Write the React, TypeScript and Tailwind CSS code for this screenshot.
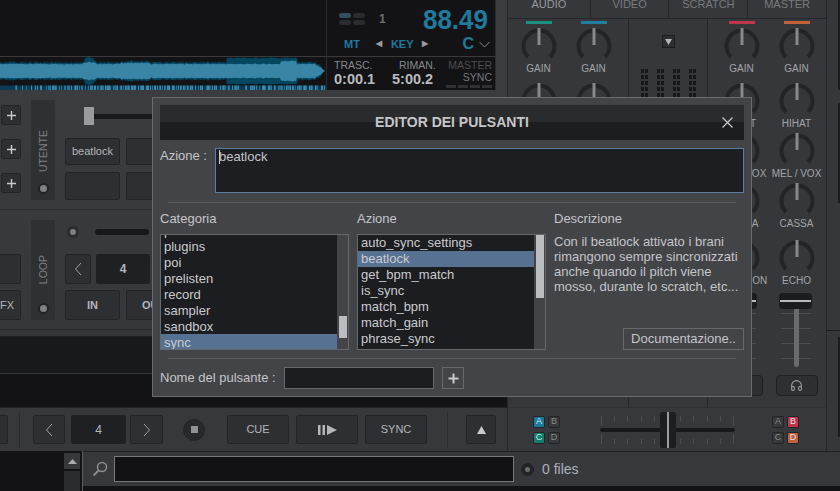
import { Headphones } from "lucide-react";

const rnd = (i: number) => {
  const v = Math.sin(i * 12.9898) * 43758.5453;
  return v - Math.floor(v);
};

// waveform envelopes, one value per pixel
const CENTER = 14;
const lightAmp = (x: number) => {
  let a = 6.5 + rnd(x) * 1;
  if (x > 82 && x < 96) a += 2 - Math.abs(x - 89) / 7;
  if (x > 120 && x < 150) a += 1;
  if (x > 280 && x < 297) a += 3;
  if (x > 315) a -= (x - 315) * 0.7;
  return Math.max(a, 0);
};
const darkAmp = (x: number) => {
  let a = lightAmp(x) + 1 + rnd(x + 500) * 1.3;
  if (x >= 227 && x < 298) a = 12.5 + rnd(x + 900) * 1.2;
  if (x > 84 && x < 94) a += 3;
  return x > 322 ? 0 : a;
};
const XS = Array.from({ length: 327 }, (_, i) => i);
const shape = (amp: (x: number) => number) =>
  XS.map((x) => `${x},${CENTER - amp(x)}`).join(" ") +
  " " +
  [...XS].reverse().map((x) => `${x},${CENTER + amp(x)}`).join(" ");

function Waveform() {
  return (
    <svg width="326" height="33" viewBox="0 0 326 33" className="block">
      <polygon points={shape(darkAmp)} fill="#03465f" />
      <polygon points={shape(lightAmp)} fill="#3a84a6" />
      <rect x="0" y="28.5" width="326" height="4.5" fill="#0c3a52" />
      {XS.filter((x) => x > 13 && rnd(x + 40) > 0.42).map((x) => (
        <rect key={x} x={x} y="28.5" width="1" height="4.5" fill={rnd(x) > 0.5 ? "#3f87a8" : "#27708f"} />
      ))}
    </svg>
  );
}

function Knob({ label, className }: { label?: string; className: string }) {
  return (
    <div className={`flex flex-col items-center w-[55px] shrink-0 ${className}`}>
      <svg width="40" height="36" viewBox="0 0 40 36" className="block shrink-0">
        <path d="M9 30 A15.5 15.5 0 1 1 31 30" fill="none" stroke="#232427" strokeWidth="4" />
        <line x1="20" y1="1" x2="20" y2="18" stroke="#87888b" strokeWidth="3" />
      </svg>
      {label && <span className="text-[10px] leading-none mt-px text-[#a3a5a8] whitespace-nowrap">{label}</span>}
    </div>
  );
}

function Fader() {
  return (
    <div className="relative flex flex-col items-center w-[55px] h-[74px]">
      <div className="absolute top-[20px] left-[12px] w-[30px] h-[60px] flex flex-col gap-[14px]">
        {[0, 1, 2, 3].map((i) => (
          <div key={i} className="h-px bg-[#4d4e51]" />
        ))}
      </div>
      <div className="relative w-[5px] h-[60px] mt-[14px] bg-[#6a6b6e] rounded-b-sm" />
      <div className="absolute top-0 left-[10px] w-[33px] h-[16px] bg-[#1b1c1f] rounded-sm flex items-center px-[1px]">
        <div className="w-full h-[2px] bg-[#b9babc]" />
      </div>
    </div>
  );
}

function Channel({ color, labels }: { color: string; labels: string[] }) {
  return (
    <div className="flex flex-col items-center w-[55px]">
      <div className={`w-[26px] h-[3px] mt-[2px] mb-[3px] ${color}`} />
      <Knob label={labels[0]} className="h-[55px]" />
      <Knob label={labels[1]} className="h-[50px]" />
      <Knob label={labels[2]} className="h-[50px]" />
      <Knob label={labels[3]} className="h-[57px]" />
      <Knob label={labels[4]} className="h-[54px]" />
      <Fader />
      <div className="w-[42px] h-[21px] mt-[8px] border border-[#1f2023] rounded-sm bg-[#2e2f32] flex items-center justify-center text-[#9a9b9e]">
        <Headphones size={13} strokeWidth={2} />
      </div>
    </div>
  );
}

function Btn({ className, children }: { className: string; children?: React.ReactNode }) {
  return (
    <div className={`flex items-center justify-center bg-[#2e2f32] border border-[#232427] rounded-[2px] text-[#b4b6ba] shrink-0 ${className}`}>
      {children}
    </div>
  );
}

function Chevron({ dir }: { dir: "l" | "r" }) {
  return (
    <svg width="8" height="14" viewBox="0 0 8 14" className="block">
      <polyline points={dir === "l" ? "7,1 1.5,7 7,13" : "1,1 6.5,7 1,13"} fill="none" stroke="#a0a2a5" strokeWidth="1" />
    </svg>
  );
}

function SidePanel({ label, className, labelClass }: { label: string; className: string; labelClass: string }) {
  return (
    <div className={`w-[24px] h-[100px] bg-[#2f3033] border border-[#303134] shrink-0 flex flex-col items-center ${className}`}>
      <span className={`[writing-mode:vertical-rl] rotate-180 text-[10.5px] leading-none text-[#7d7f82] ${labelClass}`}>{label}</span>
      <div className="mt-auto mb-[5px] w-[7px] h-[7px] rounded-full bg-[#808184] border-[2.5px] border-[#222326] box-content" />
    </div>
  );
}

function Letter({ t, on }: { t: string; on?: string }) {
  return (
    <div
      className={`w-[12px] h-[12px] rounded-[2px] flex items-center justify-center text-[9px] leading-none border border-[#232427] ${
        on ? `${on} text-[#d4e2e6]` : "bg-[#38393c] text-[#85878a]"
      }`}
    >
      {t}
    </div>
  );
}

function ListBox({
  items,
  selected,
  thumbClass,
  scrollOffset,
  rowClass,
}: {
  items: string[];
  selected: string;
  thumbClass: string;
  scrollOffset: string;
  rowClass: string;
}) {
  return (
    <div className="relative w-[189px] h-[116px] border border-[#66686c] bg-[#1c1d20] overflow-hidden">
      <div className={`w-[176px] ${scrollOffset}`}>
        {items.map((it) => (
          <div key={it} className={`h-[16px] pl-[3px] text-[13px] text-[#c9cbce] ${rowClass} ${it === selected ? "bg-[#567192]" : ""}`}>
            {it}
          </div>
        ))}
      </div>
      <div className="absolute right-0 top-0 bottom-0 w-[11px] bg-[#434448]">
        <div className={`absolute right-[1px] w-[8px] bg-[#bcbdc1] ${thumbClass}`} />
      </div>
    </div>
  );
}

function Dialog() {
  return (
    <div className="absolute left-[152px] top-[97px] w-[600px] h-[300px] bg-[#434448] border border-[#6a6b6f] p-[7px] text-[#c3c5c9] text-[13px]">
      <div className="relative h-[35px] flex items-center justify-center bg-[linear-gradient(#2a2b2d_50%,#1c1d1f_50%)]">
        <span className="font-bold text-[14px] text-[#c5c6c8]">EDITOR DEI PULSANTI</span>
        <svg width="11" height="11" viewBox="0 0 11 11" className="absolute right-[11px] top-[12px]">
          <path d="M0.5 0.5 L10.5 10.5 M10.5 0.5 L0.5 10.5" stroke="#c9cacc" strokeWidth="1.2" />
        </svg>
      </div>
      <div className="flex mt-[8px]">
        <div className="w-[55px] leading-[16px]">Azione :</div>
        <div className="w-[529px] h-[45px] border border-[#5d7c9f] bg-[#1d1e21] pl-[3px] leading-[16px] flex items-start">
          <span className="w-px h-[14px] -mr-px bg-[#c9cbce] mt-[1px]" />
          <span>beatlock</span>
        </div>
      </div>
      <div className="h-px bg-[#5a5b5f] mx-[8px] mt-[9px]" />
      <div className="flex mt-[8px] gap-[8px]">
        <div className="w-[189px]">
          <div className="h-[16px] leading-[16px] mb-[7px]">Categoria</div>
          <ListBox
            items={["pioneer", "plugins", "poi", "prelisten", "record", "sampler", "sandbox", "sync"]}
            selected="sync"
            scrollOffset="-mt-[13px]"
            rowClass="leading-[18px]"
            thumbClass="top-[81px] h-[22px]"
          />
        </div>
        <div className="w-[189px]">
          <div className="h-[16px] leading-[16px] mb-[7px]">Azione</div>
          <ListBox
            items={["auto_sync_settings", "beatlock", "get_bpm_match", "is_sync", "match_bpm", "match_gain", "phrase_sync"]}
            selected="beatlock"
            scrollOffset="mt-0"
            rowClass="leading-[16px]"
            thumbClass="top-0 h-[63px]"
          />
        </div>
        <div className="flex-1 flex flex-col">
          <div className="h-[16px] leading-[16px] mb-[7px]">Descrizione</div>
          <p className="leading-[15px]">
            Con il beatlock attivato i brani
            <br />
            rimangono sempre sincronizzati
            <br />
            anche quando il pitch viene
            <br />
            mosso, durante lo scratch, etc...
          </p>
          <div className="mt-auto self-end w-[121px] h-[22px] border border-[#66686c] flex items-center justify-center">
            Documentazione..
          </div>
        </div>
      </div>
      <div className="h-px bg-[#5a5b5f] mx-[8px] mt-[8px]" />
      <div className="flex items-center mt-[8px]">
        <div className="w-[124px]">Nome del pulsante :</div>
        <div className="w-[150px] h-[22px] border border-[#66686c] bg-[#1c1d20]" />
        <div className="w-[22px] h-[22px] ml-[8px] border border-[#66686c] flex items-center justify-center">
          <svg width="11" height="11" viewBox="0 0 11 11">
            <path d="M5.5 0.5 V10.5 M0.5 5.5 H10.5" stroke="#c9cacc" strokeWidth="2" />
          </svg>
        </div>
      </div>
    </div>
  );
}

function DeckInfo() {
  return (
    <div className="w-[170px] h-[90px] border-l border-r border-[#2c2d2f] bg-[#131316] flex flex-col">
      <div className="h-[57px] flex flex-col px-[12px] border-b border-[#3a3a3c]">
        <div className="flex items-center h-[37px]">
          <div className="grid grid-cols-2 gap-x-[2px] gap-y-[2px] w-[26px]">
            <div className="h-[5px] rounded-full bg-[#34505f]" />
            <div className="h-[5px] rounded-full bg-[#2b2c2f]" />
            <div className="h-[5px] rounded-full bg-[#2b2c2f]" />
            <div className="h-[5px] rounded-full bg-[#2b2c2f]" />
          </div>
          <span className="ml-[14px] text-[12px] font-bold text-[#6d6f72]">1</span>
          <span className="ml-auto -mr-[5px] text-[26px] leading-none font-bold text-[#1f7a9c] scale-y-[1.07]">88.49</span>
        </div>
        <div className="flex items-center h-[14px] text-[#1f7a9c] font-bold text-[11px]">
          <span className="ml-[5px]">MT</span>
          <span className="ml-[16px] text-[8px] text-[#9a9b9e]">◀</span>
          <span className="ml-[9px]">KEY</span>
          <span className="ml-[8px] text-[8px] text-[#9a9b9e]">▶</span>
          <span className="ml-[35px] text-[16px]">C</span>
          <svg width="11" height="7" viewBox="0 0 11 7" className="ml-[5px] shrink-0">
            <polyline points="0.5,1 5.5,6 10.5,1" fill="none" stroke="#88898c" strokeWidth="1" />
          </svg>
        </div>
      </div>
      <div className="flex flex-1 pl-[7px] pt-[2px]">
        <div className="w-[58px] shrink-0">
          <div className="text-[10.5px] leading-[12px] text-[#86888b]">TRASC.</div>
          <div className="text-[14.5px] leading-[17px] font-bold text-[#b9babd]">0:00.1</div>
        </div>
        <div className="w-[54px] shrink-0 flex flex-col">
          <div className="text-[10.5px] leading-[12px] text-[#86888b] pl-[7px]">RIMAN.</div>
          <div className="text-[14.5px] leading-[17px] font-bold text-[#b9babd]">5:00.2</div>
        </div>
        <div className="w-[46px] shrink-0 flex flex-col items-end">
          <div className="text-[10.5px] leading-[12px] text-[#4c4d50] whitespace-nowrap">MASTER</div>
          <div className="text-[10.5px] leading-[13px] text-[#77797c]">SYNC</div>
          <div className="flex gap-[2px] mt-[1px] w-[46px]">
            {[0, 1, 2, 3].map((i) => (
              <div key={i} className="flex-1 h-[3px] bg-[#2f3033]" />
            ))}
          </div>
        </div>
      </div>
    </div>
  );
}

function Deck() {
  return (
    <div className="w-[507px] shrink-0 flex flex-col">
      <div className="h-[90px] flex bg-[#131316]">
        <div className="w-[326px] flex flex-col">
          <div className="h-[57px] border-b border-[#3a3a3c]" />
          <Waveform />
        </div>
        <DeckInfo />
        <div className="flex-1 bg-[#3b3c40]" />
      </div>

      <div className="h-[241px] flex flex-col bg-[linear-gradient(#3b3c40,#36373b)]">
        <div className="h-[120px] flex border-b border-[#2c2d30]">
          <div className="w-[31px] pl-[1px] pt-[15px] flex flex-col gap-[14px]">
            {[0, 1, 2].map((i) => (
              <Btn key={i} className="w-[20px] h-[20px]">
                <svg width="9" height="9" viewBox="0 0 9 9">
                  <path d="M4.5 0 V9 M0 4.5 H9" stroke="#c9cacc" strokeWidth="1.4" />
                </svg>
              </Btn>
            ))}
          </div>
          <SidePanel label="UTENTE" className="mt-[10px]" labelClass="mt-[29px]" />
          <div className="pl-[10px] flex flex-col">
            <div className="flex items-center h-[18px] mt-[17px] ml-[19px]">
              <div className="w-[10px] h-[18px] bg-[#9a9b9d]" />
              <div className="w-[300px] h-[5px] bg-[#18191b]" />
            </div>
            <div className="flex gap-[6px] mt-[13px]">
              <Btn className="w-[55px] h-[27px] text-[11px] text-[#8f9194]">beatlock</Btn>
              <Btn className="w-[55px] h-[27px]" />
            </div>
            <div className="flex gap-[6px] mt-[7px]">
              <Btn className="w-[55px] h-[28px]" />
              <Btn className="w-[55px] h-[28px]" />
            </div>
          </div>
        </div>
        <div className="h-[120px] flex border-b border-[#232427]">
          <div className="w-[31px] pt-[44px] flex flex-col gap-[6px]">
            <Btn className="w-[21px] h-[30px] rounded-l-none border-l-0" />
            <Btn className="w-[21px] h-[30px] rounded-l-none border-l-0 justify-end pr-[6px] text-[11px] text-[#a9abae]">FX</Btn>
          </div>
          <SidePanel label="LOOP" className="mt-[10px]" labelClass="mt-[34px]" />
          <div className="pl-[10px] flex flex-col">
            <div className="flex items-center h-[20px] mt-[12px]">
              <div className="ml-[2px] w-[6px] h-[6px] rounded-full bg-[#808184] border-[3px] border-[#2a2b2e] box-content" />
              <div className="ml-[16px] w-[54px] h-[6px] rounded-full bg-[#17181a]" />
            </div>
            <div className="flex gap-[5px] mt-[12px]">
              <Btn className="w-[26px] h-[30px]">
                <Chevron dir="l" />
              </Btn>
              <div className="w-[54px] h-[30px] bg-[#1f2023] rounded-[2px] flex items-center justify-center text-[12px] font-bold text-[#b4b6ba]">
                4
              </div>
            </div>
            <div className="flex gap-[6px] mt-[6px]">
              <Btn className="w-[55px] h-[30px] text-[11px] font-bold">IN</Btn>
              <Btn className="w-[55px] h-[30px] text-[11px] font-bold">OUT</Btn>
            </div>
          </div>
        </div>
      </div>

      <div className="h-[6px] bg-[#35363a] border-b border-[#1d1e20]" />
      <div className="h-[70px] bg-[#131316] flex flex-col">
        <div className="h-[37px] bg-[#18191b] border-b border-[#39393b]" />
      </div>

      <div className="h-[44px] flex items-center bg-[#37383c] border-t border-[#1f2022] pr-[11px]">
        <Btn className="w-[8px] h-[29px] rounded-l-none border-l-0" />
        <div className="w-px h-[36px] bg-[#2b2c2f] ml-[11px]" />
        <Btn className="w-[32px] h-[29px] ml-[13px]">
          <Chevron dir="l" />
        </Btn>
        <div className="w-[55px] h-[29px] ml-[6px] bg-[#1f2023] rounded-[2px] flex items-center justify-center text-[12px] text-[#b4b6ba]">
          4
        </div>
        <Btn className="w-[33px] h-[29px] ml-[4px]">
          <Chevron dir="r" />
        </Btn>
        <div className="w-[22px] h-[22px] ml-[20px] rounded-full bg-[#28292c] border border-[#232427] flex items-center justify-center">
          <div className="w-[7px] h-[7px] bg-[#8f9093]" />
        </div>
        <Btn className="w-[62px] h-[29px] ml-[22px] text-[11px]">CUE</Btn>
        <Btn className="w-[62px] h-[29px] ml-[7px]">
          <svg width="19" height="10" viewBox="0 0 19 10">
            <path d="M0 0 H2.5 V10 H0 Z M4.5 0 H7 V10 H4.5 Z M9 0 L19 5 L9 10 Z" fill="#b4b6ba" />
          </svg>
        </Btn>
        <Btn className="w-[62px] h-[29px] ml-[7px] text-[11px]">SYNC</Btn>
        <div className="w-px h-[36px] bg-[#2b2c2f] ml-[20px]" />
        <Btn className="w-[30px] h-[29px] ml-[18px]">
          <svg width="9" height="8" viewBox="0 0 9 8">
            <path d="M4.5 0 L9 8 H0 Z" fill="#c9cacc" />
          </svg>
        </Btn>
      </div>
    </div>
  );
}

function Crossfader() {
  return (
    <div className="relative ml-[40px] w-[135px] h-[36px] flex items-center">
      <div className="absolute inset-x-[1px] top-[4px] bottom-[4px] flex justify-between">
        {Array.from({ length: 11 }, (_, i) => (
          <div key={i} className="w-px flex flex-col justify-between">
            <div className={`w-px bg-[#4d4e51] ${i % 5 === 0 ? "h-[10px]" : "h-[5px]"}`} />
            <div className={`w-px bg-[#4d4e51] ${i % 5 === 0 ? "h-[10px]" : "h-[5px]"}`} />
          </div>
        ))}
      </div>
      <div className="relative w-full h-[4px] rounded-full bg-[#17181a]" />
      <div className="absolute left-[60px] top-0 w-[16px] h-[36px] bg-[#1d1e21] rounded-[2px] flex justify-center">
        <div className="w-[2px] h-full bg-[#9a9b9e]" />
      </div>
    </div>
  );
}

function Mixer() {
  return (
    <div className="flex-1 flex">
      <div className="w-[320px] flex flex-col border-l border-r border-[#26272a]">
        <div className="h-[19px] flex border-b border-[#26272a] bg-[#36373b] text-[11px] leading-[9px] text-[#787a7d] overflow-hidden">
          <div className="w-[82px] text-center text-[#96989b]">AUDIO</div>
          <div className="w-[79px] text-center border-l border-[#26272a]">VIDEO</div>
          <div className="w-[79px] text-center border-l border-[#26272a]">SCRATCH</div>
          <div className="w-[79px] text-center border-l border-[#26272a]">MASTER</div>
        </div>
        <div className="h-[388px] flex bg-[#36373b]">
          {/* everything below the first row of this column sits behind the dialog */}
          <div className="w-[121px] flex justify-center pr-[4px] border-r border-[#26272a]">
            <Channel color="bg-[#1b8f80]" labels={["GAIN"]} />
            <Channel color="bg-[#1f7f9f]" labels={["GAIN"]} />
          </div>
          <div className="w-[79px] border-r border-[#26272a] flex flex-col items-center">
            <div className="mt-[16px] w-[13px] h-[13px] border border-[#1c1d1f] bg-[#2d2e31] flex items-center justify-center">
              <svg width="7" height="6" viewBox="0 0 7 6">
                <path d="M0 0 H7 L3.5 6 Z" fill="#b4b6ba" />
              </svg>
            </div>
            <div className="mt-[21px] flex gap-[9px]">
              {[0, 1, 2, 3].map((c) => (
                <div key={c} className="grid grid-cols-2 gap-x-[1px] gap-y-[2px]">
                  {Array.from({ length: 12 }, (_, i) => (
                    <div key={i} className="w-[3px] h-[4px] bg-[#17181a]" />
                  ))}
                </div>
              ))}
            </div>
          </div>
          <div className="flex-1 flex justify-center pl-[4px]">
            <Channel color="bg-[#c2344a]" labels={["GAIN", "HIHAT", "MEL / VOX", "CASSA", "REACTION"]} />
            <Channel color="bg-[#c2603a]" labels={["GAIN", "HIHAT", "MEL / VOX", "CASSA", "ECHO"]} />
          </div>
        </div>
        <div className="h-[44px] flex items-center bg-[#37383c] border-t border-[#303134]">
          <div className="ml-[25px] grid grid-cols-2 gap-x-[3px] gap-y-[4px]">
            <Letter t="A" on="bg-[#1b7a9c]" />
            <Letter t="B" />
            <Letter t="C" on="bg-[#12806f]" />
            <Letter t="D" />
          </div>
          <Crossfader />
          <div className="ml-[37px] grid grid-cols-2 gap-x-[3px] gap-y-[4px]">
            <Letter t="A" />
            <Letter t="B" on="bg-[#c2344a]" />
            <Letter t="C" />
            <Letter t="D" on="bg-[#c2603a]" />
          </div>
        </div>
      </div>
      <div className="flex-1 bg-[#36373b] flex flex-col items-end">
        <div className="w-[2px] h-[90px] bg-[#1b1c1e]" />
        <div className="w-[2px] h-[100px] mt-[13px] bg-[#1b1c1e]" />
        <div className="w-full h-px mt-[127px] bg-[#1b1c1e]" />
        <div className="w-[2px] h-[100px] mt-[6px] bg-[#1b1c1e]" />
      </div>
    </div>
  );
}

function Browser() {
  return (
    <div className="h-[40px] flex bg-[#131316]">
      <div className="w-[64px]" />
      <div className="w-[16px] flex flex-col pt-[2px] gap-[2px]">
        <div className="h-[16px] bg-[#37383c] flex items-center justify-center">
          <svg width="9" height="5" viewBox="0 0 9 5">
            <path d="M4.5 0 L9 5 H0 Z" fill="#a9abae" />
          </svg>
        </div>
        <div className="flex-1 bg-[#2b2c2f]" />
      </div>
      <div className="w-[3px] border-r border-[#5a5b5e]" />
      <div className="flex-1 h-[35px] flex items-center bg-[#37383c] border-t border-[#1f2022]">
        <svg width="16" height="16" viewBox="0 0 16 16" className="ml-[9px]">
          <circle cx="10" cy="6" r="4.5" fill="none" stroke="#8a8b8e" strokeWidth="1.6" />
          <line x1="6.5" y1="9.5" x2="1.5" y2="14.5" stroke="#8a8b8e" strokeWidth="2" />
        </svg>
        <div className="w-[400px] h-[26px] ml-[6px] border border-[#77787b] bg-[#121215]" />
        <div className="w-[13px] h-[13px] ml-[7px] rounded-full bg-[#232427] flex items-center justify-center">
          <div className="w-[5px] h-[5px] rounded-full bg-[#6a6b6e]" />
        </div>
        <span className="ml-[8px] text-[14px] text-[#aab2ba]">0 files</span>
      </div>
    </div>
  );
}

export default function App() {
  return (
    <div className="relative w-[840px] h-[491px] overflow-hidden bg-[#131316] font-['Liberation_Sans',Arial,sans-serif]">
      <div className="h-[451px] flex">
        <Deck />
        <Mixer />
      </div>
      <Browser />
      <Dialog />
    </div>
  );
}
